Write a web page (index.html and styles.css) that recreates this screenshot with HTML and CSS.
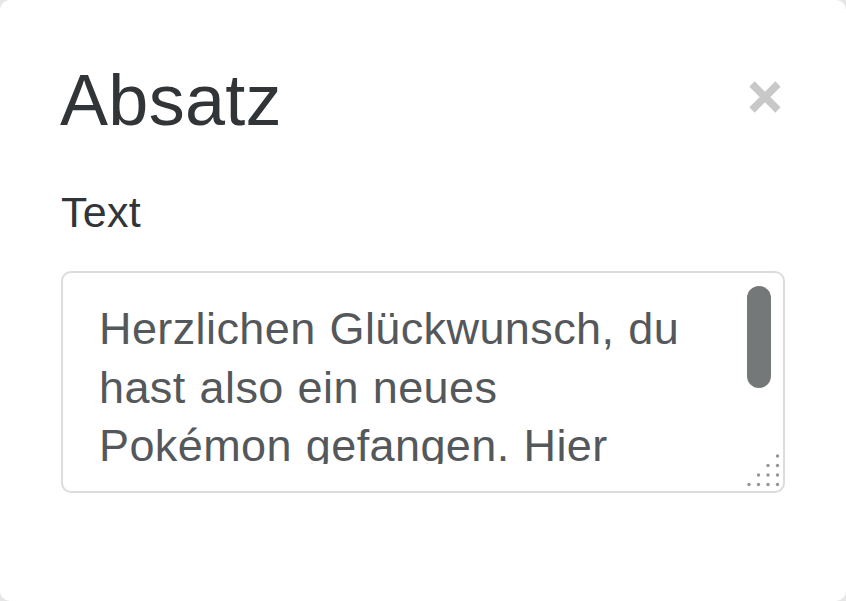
FILE: index.html
```html
<!DOCTYPE html>
<html lang="de">
<head>
<meta charset="utf-8">
<title>Absatz</title>
<link rel="stylesheet" href="styles.css">
</head>
<body>
<div class="card">
  <div class="header">
    <h1 class="title">Absatz</h1>
    <button class="close" aria-label="Schließen">
      <svg width="34" height="34" viewBox="0 0 34 34"><path d="M4 4 L30 30 M30 4 L4 30" stroke="#c8c8c8" stroke-width="7.5" fill="none"/></svg>
    </button>
  </div>
  <label class="label">Text</label>
  <div class="field">
    <div class="text">Herzlichen Glückwunsch, du hast also ein neues Pokémon gefangen. Hier erfährst du, wie du dich am besten um dein neues Pokémon kümmerst.</div>
    <div class="thumb"></div>
    <svg class="grip" width="36" height="36" viewBox="0 0 36 36">
      <g fill="#959595">
        <circle cx="31.5" cy="3" r="1.7"/>
        <circle cx="22" cy="12.5" r="1.7"/><circle cx="31.5" cy="12.5" r="1.7"/>
        <circle cx="12.5" cy="22" r="1.7"/><circle cx="22" cy="22" r="1.7"/><circle cx="31.5" cy="22" r="1.7"/>
        <circle cx="3" cy="31.5" r="1.7"/><circle cx="12.5" cy="31.5" r="1.7"/><circle cx="22" cy="31.5" r="1.7"/><circle cx="31.5" cy="31.5" r="1.7"/>
      </g>
    </svg>
  </div>
</div>
</body>
</html>
```
FILE: styles.css
```css
html, body {
  margin: 0;
  padding: 0;
  background: #e6e6e6;
}
body {
  font-family: "Liberation Sans", Arial, sans-serif;
}
.card {
  width: 846px;
  height: 601px;
  box-sizing: border-box;
  background: #ffffff;
  border-radius: 10px;
  padding: 64px 61px 0 61px;
}
.header {
  display: flex;
  justify-content: space-between;
  align-items: flex-start;
}
.title {
  margin: 0;
  font-size: 72px;
  line-height: 72px;
  font-weight: normal;
  color: #323538;
  margin-left: -1px;
  letter-spacing: 0.3px;
}
.close {
  border: 0;
  background: none;
  padding: 0;
  margin: 16px 3px 0 0;
  width: 34px;
  height: 34px;
  display: block;
}
.close svg {
  display: block;
}
.label {
  display: block;
  margin-top: 55px;
  font-size: 43px;
  line-height: 43px;
  color: #323538;
  letter-spacing: 0.3px;
}
.field {
  position: relative;
  margin-top: 37px;
  height: 222px;
  box-sizing: border-box;
  border: 2px solid #dcdcdc;
  border-radius: 10px;
  padding: 27px 100px 27px 36px;
}
.text {
  height: 164px;
  overflow: hidden;
  font-size: 45px;
  line-height: 58.5px;
  color: #54585b;
  letter-spacing: 0.4px;
  word-spacing: 1px;
}
.thumb {
  position: absolute;
  top: 13px;
  right: 12px;
  width: 24px;
  height: 102px;
  border-radius: 12px;
  background: #757878;
}
.grip {
  position: absolute;
  right: 1px;
  bottom: 2px;
  display: block;
}
```
